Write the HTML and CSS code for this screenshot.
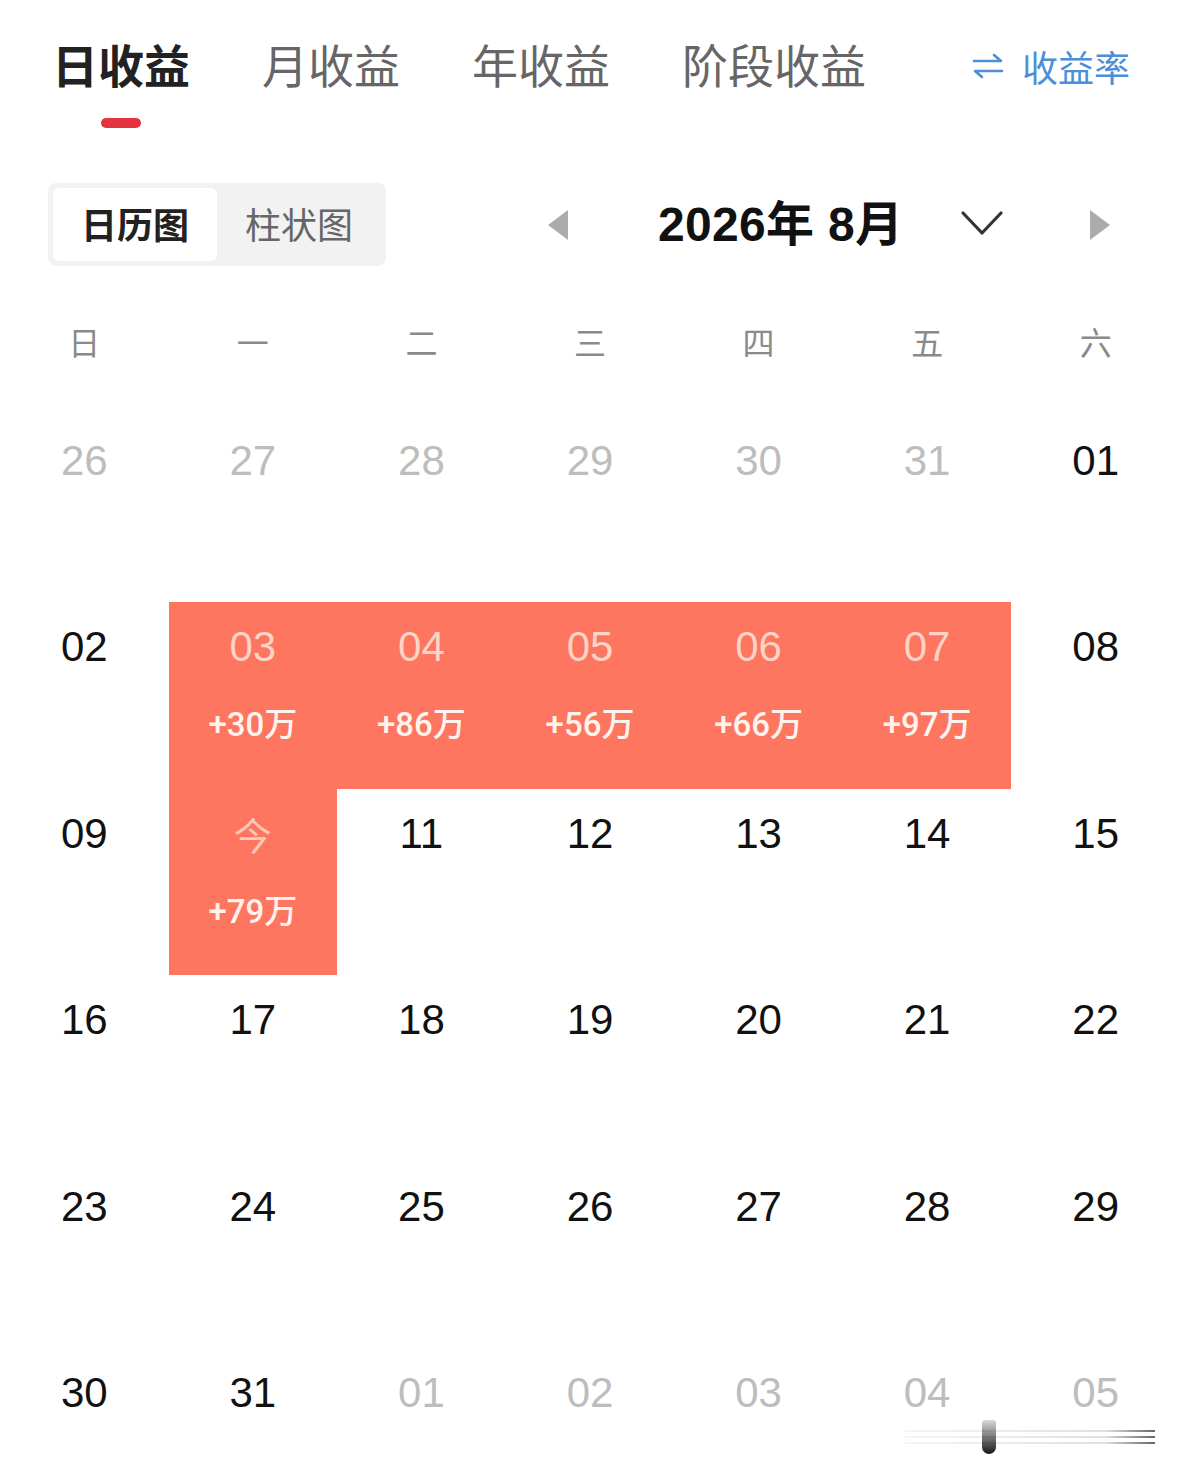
FILE: index.html
```html
<!DOCTYPE html>
<html lang="zh-CN">
<head>
<meta charset="utf-8">
<title>日收益</title>
<link rel="stylesheet" href="styles.css">
</head>
<body>
<div class="page">
  <div class="tabs">
    <div class="tab active"><span class="tab-text">日收益</span><span class="tab-line"></span></div>
    <div class="tab"><span class="tab-text">月收益</span></div>
    <div class="tab"><span class="tab-text">年收益</span></div>
    <div class="tab"><span class="tab-text">阶段收益</span></div>
    <div class="rate">
      <svg class="rate-icon" width="32" height="26" viewBox="0 0 32 26" fill="none" stroke="#4a8fd8" stroke-width="2.6" stroke-linecap="round" stroke-linejoin="round">
        <path d="M2 8 H29 L22 2"/>
        <path d="M30 18 H3 L10 24"/>
      </svg>
      <span class="rate-text">收益率</span>
    </div>
  </div>

  <div class="toolbar">
    <div class="seg">
      <div class="seg-item seg-on">日历图</div>
      <div class="seg-item">柱状图</div>
    </div>
    <svg class="tri tri-left" width="20" height="30" viewBox="0 0 20 30"><path d="M20 0 V30 L0 15 Z" fill="#ababab"/></svg>
    <div class="month">2026年 8月</div>
    <svg class="chev" width="44" height="28" viewBox="0 0 44 28" fill="none" stroke="#333" stroke-width="3.2" stroke-linecap="round" stroke-linejoin="round"><path d="M3 4 L22 24 L41 4"/></svg>
    <svg class="tri tri-right" width="20" height="30" viewBox="0 0 20 30"><path d="M0 0 V30 L20 15 Z" fill="#ababab"/></svg>
  </div>

  <div class="weekdays">
    <span>日</span><span>一</span><span>二</span><span>三</span><span>四</span><span>五</span><span>六</span>
  </div>

  <div class="grid">
    <div class="cell"><span class="num dim">26</span></div>
    <div class="cell"><span class="num dim">27</span></div>
    <div class="cell"><span class="num dim">28</span></div>
    <div class="cell"><span class="num dim">29</span></div>
    <div class="cell"><span class="num dim">30</span></div>
    <div class="cell"><span class="num dim">31</span></div>
    <div class="cell"><span class="num">01</span></div>

    <div class="cell"><span class="num">02</span></div>
    <div class="cell hot"><span class="num">03</span><span class="amt">+30万</span></div>
    <div class="cell hot"><span class="num">04</span><span class="amt">+86万</span></div>
    <div class="cell hot"><span class="num">05</span><span class="amt">+56万</span></div>
    <div class="cell hot"><span class="num">06</span><span class="amt">+66万</span></div>
    <div class="cell hot"><span class="num">07</span><span class="amt">+97万</span></div>
    <div class="cell"><span class="num">08</span></div>

    <div class="cell"><span class="num">09</span></div>
    <div class="cell hot"><span class="num today">今</span><span class="amt">+79万</span></div>
    <div class="cell"><span class="num">11</span></div>
    <div class="cell"><span class="num">12</span></div>
    <div class="cell"><span class="num">13</span></div>
    <div class="cell"><span class="num">14</span></div>
    <div class="cell"><span class="num">15</span></div>

    <div class="cell"><span class="num">16</span></div>
    <div class="cell"><span class="num">17</span></div>
    <div class="cell"><span class="num">18</span></div>
    <div class="cell"><span class="num">19</span></div>
    <div class="cell"><span class="num">20</span></div>
    <div class="cell"><span class="num">21</span></div>
    <div class="cell"><span class="num">22</span></div>

    <div class="cell"><span class="num">23</span></div>
    <div class="cell"><span class="num">24</span></div>
    <div class="cell"><span class="num">25</span></div>
    <div class="cell"><span class="num">26</span></div>
    <div class="cell"><span class="num">27</span></div>
    <div class="cell"><span class="num">28</span></div>
    <div class="cell"><span class="num">29</span></div>

    <div class="cell"><span class="num">30</span></div>
    <div class="cell"><span class="num">31</span></div>
    <div class="cell"><span class="num dim">01</span></div>
    <div class="cell"><span class="num dim">02</span></div>
    <div class="cell"><span class="num dim">03</span></div>
    <div class="cell"><span class="num dim">04</span></div>
    <div class="cell"><span class="num dim">05</span></div>
  </div>

  <div class="mark">
    <span class="mark-line l1"></span>
    <span class="mark-line l2"></span>
    <span class="mark-line l3"></span>
    <span class="mark-knob"></span>
  </div>
</div>
</body>
</html>
```

FILE: styles.css
```css
* { box-sizing: border-box; }
html, body { margin: 0; padding: 0; background: #fff; }
body {
  font-family: "Liberation Sans", "Noto Sans CJK SC", sans-serif;
  color: #111;
}
.page {
  position: relative;
  width: 1180px;
  height: 1478px;
  overflow: hidden;
}

/* tabs */
.tabs {
  display: flex;
  align-items: flex-start;
  padding: 37px 50px 0 52px;
  height: 128px;
}
.tab {
  display: flex;
  flex-direction: column;
  align-items: center;
  margin-right: 72px;
}
.tab-text {
  font-family: "Noto Sans CJK SC", sans-serif;
  font-size: 46px;
  line-height: 52px;
  color: #666;
  font-weight: 400;
}
.tab.active .tab-text {
  color: #222;
  font-weight: 700;
}
.tab-line {
  margin-top: 29px;
  width: 40px;
  height: 10px;
  border-radius: 5px;
  background: #e3333c;
}
.rate {
  margin-left: auto;
  display: flex;
  align-items: center;
  height: 58px;
  gap: 18px;
}
.rate-text {
  font-family: "Noto Sans CJK SC", sans-serif;
  font-size: 36px;
  color: #4a8fd8;
}

/* toolbar */
.toolbar {
  display: flex;
  align-items: center;
  margin-top: 55px;
  padding-left: 48px;
  height: 83px;
}
.seg {
  display: flex;
  width: 338px;
  height: 83px;
  padding: 5px;
  background: #f2f2f2;
  border-radius: 8px;
}
.seg-item {
  width: 164px;
  display: flex;
  align-items: center;
  justify-content: center;
  font-family: "Noto Sans CJK SC", sans-serif;
  font-size: 36px;
  color: #666;
  border-radius: 6px;
  padding-bottom: 4px;
}
.seg-on {
  background: #fff;
  color: #222;
  font-weight: 700;
}
.tri-left { margin-left: 162px; }
.month {
  margin-left: 90px;
  width: 240px;
  margin-top: -10px;
  font-family: "Liberation Sans", "Noto Sans CJK SC", sans-serif;
  font-size: 48px;
  font-weight: 700;
  color: #111;
  white-space: nowrap;
  letter-spacing: 0.3px;
}
.chev { margin-left: 62px; margin-top: -4px; }
.tri-right { margin-left: 86px; }

/* weekdays */
.weekdays {
  display: grid;
  grid-template-columns: repeat(7, 1fr);
  padding: 55px 0 55px;
}
.weekdays span {
  text-align: center;
  font-family: "Noto Sans CJK SC", sans-serif;
  font-weight: 400;
  font-size: 32px;
  line-height: 40px;
  color: #8a8a8a;
}

/* calendar grid */
.grid {
  display: grid;
  grid-template-columns: repeat(7, 1fr);
  grid-auto-rows: 186.4px;
}
.cell {
  display: flex;
  flex-direction: column;
  align-items: center;
  padding-top: 20px;
}
.num {
  font-size: 42px;
  line-height: 50px;
  color: #111;
}
.num.dim { color: #bdbdbd; }
.cell.hot { background: #fe7560; }
.cell.hot .num { color: #fdd3c6; }
.cell.hot .num.today {
  font-family: "Noto Sans CJK SC", sans-serif;
  font-size: 38px;
  font-weight: 400;
  color: #fcc9b9;
}
.amt {
  margin-top: 33px;
  font-family: "Roboto", "Noto Sans CJK SC", sans-serif;
  font-weight: 500;
  font-size: 33px;
  line-height: 40px;
  color: #fff3ee;
}

/* watermark strip */
.mark {
  position: absolute;
  left: 905px;
  top: 1418px;
  width: 250px;
  height: 36px;
}
.mark-line {
  position: absolute;
  left: 0;
  right: 0;
  height: 2px;
  background: linear-gradient(to right, rgba(0,0,0,0.04), rgba(0,0,0,0.12) 80%, rgba(0,0,0,0.6));
}
.l1 { top: 12px; }
.l2 { top: 18px; }
.l3 { top: 24px; }
.mark-knob {
  position: absolute;
  left: 77px;
  top: 2px;
  width: 14px;
  height: 34px;
  border-radius: 3px 3px 7px 7px;
  background: linear-gradient(to bottom, rgba(0,0,0,0.15), rgba(0,0,0,0.9));
}
```
